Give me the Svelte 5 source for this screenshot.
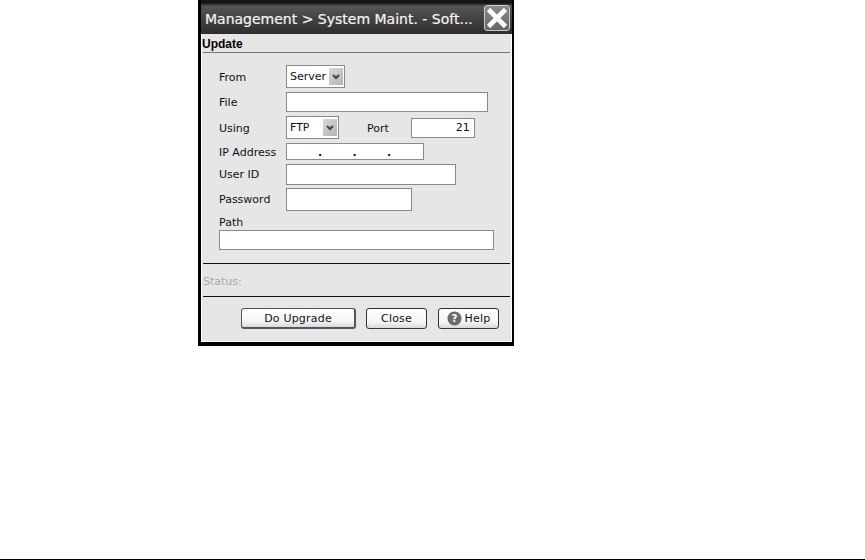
<script lang="ts">
  let ipParts = ['', '', '', '']
</script>

<div class="page">
  <div class="window">
    <div class="titlebar">
      <span class="title">Management &gt; System Maint. - Soft...</span>
      <button class="x" aria-label="Close window">
        <svg width="24" height="24" viewBox="0 0 24 24">
          <path d="M3.5 3.5 L20.5 20.5 M20.5 3.5 L3.5 20.5" stroke="#fff" stroke-width="4.6" fill="none" />
        </svg>
      </button>
    </div>
    <div class="panel">
      <div class="section-head">Update</div>
      <div class="form">
        <div class="row from">
          <label for="from" class="low">From</label>
          <div class="select" id="from" style="width: 59px">
            <span>Server</span>
            <i class="arrow">
              <svg width="8" height="6" viewBox="0 0 8 6"><path d="M1 1 L4 4 L7 1" stroke="#444" stroke-width="2" fill="none" /></svg>
            </i>
          </div>
        </div>
        <div class="row file">
          <label for="file">File</label>
          <input id="file" class="w-file" />
        </div>
        <div class="row using">
          <label for="using" class="low">Using</label>
          <div class="select" id="using" style="width: 53px">
            <span>FTP</span>
            <i class="arrow">
              <svg width="8" height="6" viewBox="0 0 8 6"><path d="M1 1 L4 4 L7 1" stroke="#444" stroke-width="2" fill="none" /></svg>
            </i>
          </div>
          <label for="port" class="port-label">Port</label>
          <input id="port" class="w-port" value="21" />
        </div>
        <div class="row ip">
          <label for="ip" class="low">IP Address</label>
          <div class="ipbox" id="ip">
            {#each ipParts as part, i}
              <span class="octet">{part}</span>
              {#if i < 3}<span class="dot">.</span>{/if}
            {/each}
          </div>
        </div>
        <div class="row user">
          <label for="user">User ID</label>
          <input id="user" class="w-user" />
        </div>
        <div class="row pass">
          <label for="pass">Password</label>
          <input id="pass" class="w-pass" />
        </div>
        <div class="path">
          <label for="path">Path</label>
          <input id="path" class="w-path" />
        </div>
      </div>
      <div class="status">Status:</div>
      <div class="actions">
        <button class="btn upgrade">Do Upgrade</button>
        <button class="btn close">Close</button>
        <button class="btn help">
          <svg width="15" height="15" viewBox="0 0 16 16">
            <circle cx="8" cy="8" r="7.5" fill="#6b6b6b" />
            <text x="8" y="12" text-anchor="middle" class="q">?</text>
          </svg>
          Help
        </button>
      </div>
    </div>
  </div>
  <div class="rule"></div>
</div>

<style>
  :global(body) {
    background: #fff;
  }

  .page {
    width: 865px;
    height: 560px;
    overflow: hidden;
    display: flex;
    flex-direction: column;
    justify-content: space-between;
    font-family: "DejaVu Sans", sans-serif;
    font-size: 11px;
    color: #111;
  }

  .window {
    width: 316px;
    height: 346px;
    margin-left: 198px;
    box-sizing: border-box;
    background: #000;
    padding: 0 2px 4px 3px;
    display: flex;
    flex-direction: column;
  }

  .titlebar {
    height: 34px;
    flex: none;
    background: linear-gradient(#151515, #151515 3px, #555 6px, #404040 60%, #2e2e2e);
    display: flex;
    align-items: center;
    justify-content: space-between;
    padding: 4px 2px 0 4px;
    box-sizing: border-box;
  }

  .title {
    color: #f4f4f4;
    font-size: 14px;
    white-space: nowrap;
    -webkit-text-stroke: 0.2px #f4f4f4;
  }

  .x {
    width: 26px;
    height: 26px;
    padding: 0;
    background: linear-gradient(#8a8a8a, #666);
    border: 1px solid #ccc;
    border-radius: 3px;
    display: flex;
    align-items: center;
    justify-content: center;
    margin-top: -3px;
  }

  .panel {
    flex: 1;
    background: #e6e6e6;
    border-left: 1px solid #fff;
    border-right: 1px solid #fff;
    border-bottom: 1px solid #fff;
    display: flex;
    flex-direction: column;
  }

  .section-head {
    height: 19px;
    box-sizing: border-box;
    font-weight: bold;
    font-family: "Liberation Sans", sans-serif;
    font-size: 12px;
    line-height: 20px;
    color: #000;
    border-bottom: 1px solid #777;
    margin: 0 1px;
    text-indent: -1px;
  }

  .form {
    padding: 12px 0 0 16px;
    height: 211px;
    box-sizing: border-box;
    display: flex;
    flex-direction: column;
    gap: 4px;
    border-bottom: 1px solid #111;
    margin: 0 1px;
  }

  .row {
    display: flex;
    align-items: center;
    flex: none;
  }

  .row label {
    width: 67px;
    flex: none;
  }

  .row label.low {
    margin-top: 2px;
  }

  .from { height: 23px; }
  .file { height: 20px; }
  .using { height: 23px; }
  .ip { height: 17px; }
  .user { height: 21px; }
  .pass { height: 23px; margin-top: -1px; }

  .row .port-label {
    width: auto;
    margin: 2px 22px 0 28px;
  }

  input {
    box-sizing: border-box;
    height: 20px;
    border: 1px solid #8a8a8a;
    background: #fff;
    font: inherit;
    color: inherit;
    padding: 0 3px;
    margin: 0;
  }

  .w-file { width: 202px; }
  .w-port { width: 64px; text-align: right; padding-right: 4px; height: 20px; }
  .w-user { width: 170px; height: 21px; }
  .w-pass { width: 126px; height: 23px; }
  .w-path { width: 275px; height: 20px; }

  .select {
    box-sizing: border-box;
    height: 23px;
    border: 1px solid #8a8a8a;
    background: #fff;
    display: flex;
    align-items: center;
    justify-content: space-between;
    padding: 2px 1px 2px 3px;
  }

  .arrow {
    width: 14px;
    height: 17px;
    background: linear-gradient(135deg, #d8d8d8, #b4b4b4);
    display: flex;
    align-items: center;
    justify-content: center;
  }

  .ipbox {
    box-sizing: border-box;
    width: 138px;
    height: 17px;
    border: 1px solid #8a8a8a;
    background: #fff;
    display: flex;
    align-items: flex-end;
    line-height: 13px;
    font-weight: bold;
  }

  .octet { width: 31px; }
  .dot { width: 3.5px; }

  .path {
    display: flex;
    flex-direction: column;
    gap: 1px;
    margin-top: 1px;
  }

  .status {
    height: 33px;
    flex: none;
    box-sizing: border-box;
    line-height: 36px;
    color: #a8a8a8;
    border-bottom: 1px solid #111;
    margin: 0 1px;
  }

  .actions {
    display: flex;
    justify-content: flex-end;
    gap: 10px;
    padding: 11px 12px 0 0;
  }

  .btn {
    box-sizing: border-box;
    height: 21px;
    padding: 0;
    font: inherit;
    letter-spacing: 0.2px;
    color: #111;
    background: linear-gradient(#fff, #f4f4f4 70%, #d8d8d8);
    border: 1px solid #333;
    border-radius: 3px;
    display: flex;
    align-items: center;
    justify-content: center;
    gap: 3px;
  }

  .upgrade { width: 115px; border-width: 1px 2px 2px 1px; border-color: #555; }
  .close { width: 61px; margin-right: 1px; }
  .help { width: 61px; }

  .q {
    font-size: 11px;
    font-weight: bold;
    fill: #fff;
  }

  .rule {
    height: 1px;
    background: #000;
    flex: none;
  }
</style>
